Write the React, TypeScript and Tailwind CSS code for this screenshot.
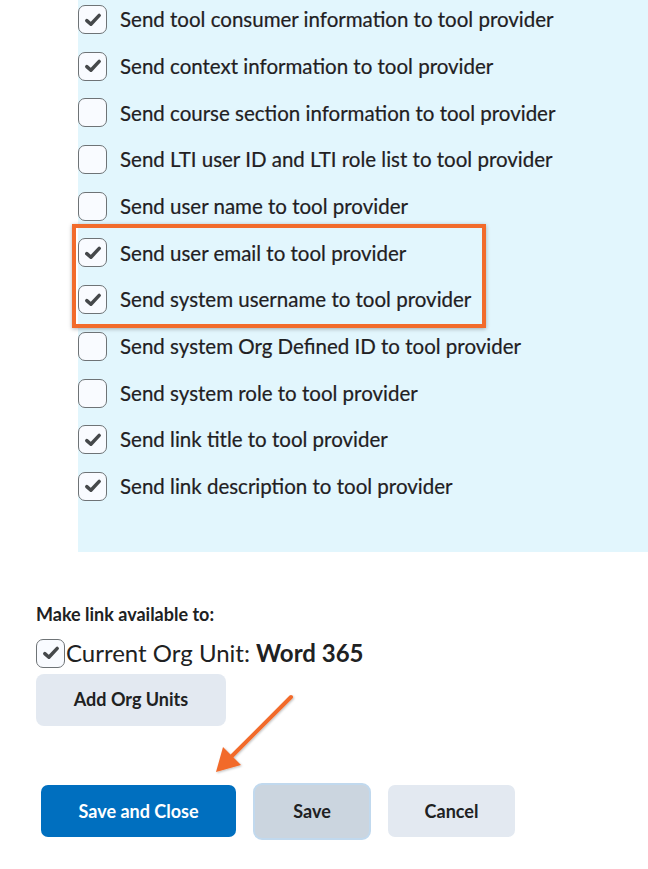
import React from 'react';

const options = [
  { label: 'Send tool consumer information to tool provider', checked: true },
  { label: 'Send context information to tool provider', checked: true },
  { label: 'Send course section information to tool provider', checked: false },
  { label: 'Send LTI user ID and LTI role list to tool provider', checked: false },
  { label: 'Send user name to tool provider', checked: false },
  { label: 'Send user email to tool provider', checked: true },
  { label: 'Send system username to tool provider', checked: true },
  { label: 'Send system Org Defined ID to tool provider', checked: false },
  { label: 'Send system role to tool provider', checked: false },
  { label: 'Send link title to tool provider', checked: true },
  { label: 'Send link description to tool provider', checked: true },
];

const Checkbox = ({ checked }: { checked: boolean }) => (
  <span className="flex h-[29px] w-[29px] shrink-0 items-center justify-center rounded-[7px] border border-[#6e7376] bg-[#f9fbff]">
    {checked && (
      <svg width="20" height="20" viewBox="0 0 20 20" fill="none">
        <path d="M3.8 10.6 L7.9 14.2 L16.2 5.4" stroke="#46494b" strokeWidth="3.5" strokeLinecap="round" strokeLinejoin="round" />
      </svg>
    )}
  </span>
);

const Row = ({ label, checked }: { label: string; checked: boolean }) => (
  <div className="flex h-[29px] items-center gap-[13px]">
    <Checkbox checked={checked} />
    <span className="text-[20.5px] leading-none text-[#1f2022] [-webkit-text-stroke:0.2px_#1f2022]">{label}</span>
  </div>
);

export default function App() {
  return (
    <div className="relative h-[869px] w-[648px] overflow-hidden bg-white font-['Lato',sans-serif]">
      <div className="ml-[78px] flex flex-col gap-[17.7px] bg-[#e2f6fd] pt-[5px] pb-[51px]">
        {options.slice(0, 5).map((o) => (
          <Row key={o.label} {...o} />
        ))}
        <div className="-my-[14px] -ml-[6px] flex w-[414px] flex-col gap-[17.7px] border-[4px] border-[#f26b2b] py-[10px] pl-[2px] shadow-[0_1px_4px_rgba(0,0,0,0.3)]">
          {options.slice(5, 7).map((o) => (
            <Row key={o.label} {...o} />
          ))}
        </div>
        {options.slice(7).map((o) => (
          <Row key={o.label} {...o} />
        ))}
      </div>

      <div className="ml-[36px] mt-[53px] text-[18px] font-bold leading-none text-[#202122]">Make link available to:</div>
      <div className="ml-[36px] mt-[16px] flex items-center">
        <Checkbox checked />
        <span className="ml-[1px] text-[24px] leading-none text-[#202122]">
          Current Org Unit: <b>Word 365</b>
        </span>
      </div>
      <button className="ml-[36px] mt-[6px] flex h-[52px] w-[190px] items-center justify-center rounded-[8px] bg-[#e3e9f1] text-[18px] font-bold text-[#202122]">
        Add Org Units
      </button>

      <div className="ml-[41px] mt-[57px] flex items-center gap-[17px]">
        <button className="h-[52px] w-[195px] rounded-[7px] bg-[#006fbf] text-[18px] font-bold text-white">Save and Close</button>
        <button className="h-[57px] w-[118px] rounded-[9px] border-2 border-[#c1d9ee] bg-[#cbd5df] text-[18px] font-bold text-[#202122]">
          Save
        </button>
        <button className="h-[52px] w-[127px] rounded-[7px] bg-[#e3e9f1] text-[18px] font-bold text-[#202122]">Cancel</button>
      </div>

      <svg className="absolute left-0 top-0" width="648" height="869" viewBox="0 0 648 869" fill="none">
        <defs>
          <filter id="sh" x="-20%" y="-20%" width="140%" height="140%">
            <feDropShadow dx="1" dy="1" stdDeviation="1.2" floodColor="#000" floodOpacity="0.25" />
          </filter>
        </defs>
        <g filter="url(#sh)">
          <line x1="291" y1="697" x2="230" y2="758" stroke="#f26b2b" strokeWidth="4" strokeLinecap="round" />
          <polygon points="216,772 223,747 241,765" fill="#f26b2b" />
        </g>
      </svg>
    </div>
  );
}
